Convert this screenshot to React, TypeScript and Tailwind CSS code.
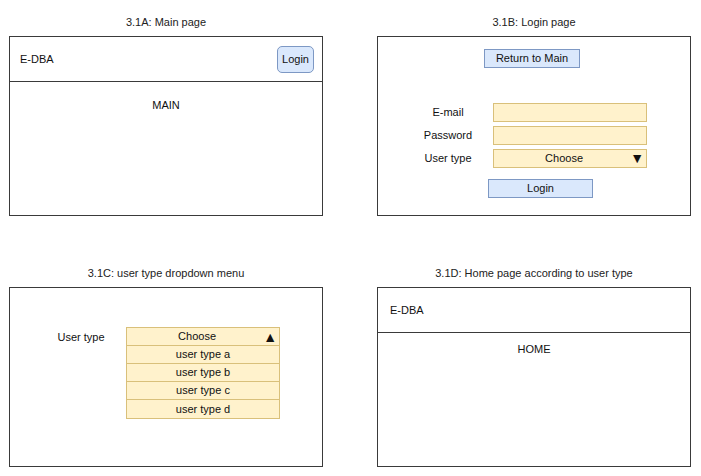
const font = { fontFamily: '"Liberation Sans", Arial, sans-serif' };

function Panel({ title, children }: { title: string; children: React.ReactNode }) {
  return (
    <div className="flex flex-col">
      <div className="h-[14px] text-center text-[11px] leading-[14px] text-[#222]">{title}</div>
      <div className="mt-[7px] h-[180px] w-[314px] border border-[#3a3a3a] bg-white">{children}</div>
    </div>
  );
}

function Field({ label, children }: { label: string; children?: React.ReactNode }) {
  return (
    <div className="flex h-[20px] items-center">
      <span className="w-[115px] pl-[25px] text-center text-[11px] text-[#111]">{label}</span>
      <div className="flex h-[19px] w-[154px] items-center border border-[#d9c07a] bg-[#fff2cc]">
        {children}
      </div>
    </div>
  );
}

export default function App() {
  const options = ["user type a", "user type b", "user type c", "user type d"];

  return (
    <div className="h-[476px] w-[701px] bg-white pl-[9px] pt-[15px] text-[#111]" style={font}>
      <div className="grid grid-cols-[314px_314px] gap-x-[54px] gap-y-[50px]">
        {/* 3.1A */}
        <Panel title="3.1A: Main page">
          <div className="flex h-[45px] items-center justify-between border-b border-[#3a3a3a] pl-[10px] pr-[8px]">
            <span className="text-[11px]">E-DBA</span>
            <button className="h-[27px] w-[37px] rounded-[5px] border border-[#7d98c4] bg-[#dae8fc] text-[11px]">
              Login
            </button>
          </div>
          <div className="pt-[15px] text-center text-[11px]">MAIN</div>
        </Panel>

        {/* 3.1B */}
        <Panel title="3.1B: Login page">
          <div className="flex flex-col">
            <div className="mt-[12px] flex justify-center pr-[4px]">
              <div className="flex h-[19px] w-[96px] items-center justify-center border border-[#7d98c4] bg-[#dae8fc] text-[11px]">
                Return to Main
              </div>
            </div>
            <div className="mt-[34px] flex flex-col gap-[3px]">
              <Field label="E-mail" />
              <Field label="Password" />
              <Field label="User type">
                <span className="flex-1 pl-[4px] text-center text-[11px]">Choose</span>
                <span className="pr-[2px] text-[14px] leading-none">▼</span>
              </Field>
            </div>
            <div className="mt-[11px] flex pl-[110px]">
              <div className="flex h-[19px] w-[105px] items-center justify-center border border-[#7d98c4] bg-[#dae8fc] text-[11px]">
                Login
              </div>
            </div>
          </div>
        </Panel>

        {/* 3.1C */}
        <Panel title="3.1C: user type dropdown menu">
          <div className="flex pt-[39px]">
            <span className="w-[116px] pl-[26px] pt-[2px] text-center text-[11px]">User type</span>
            <div className="flex w-[154px] flex-col border border-[#d9c07a] bg-[#fff2cc]">
              <div className="flex h-[18px] items-center border-b border-[#d9c07a]">
                <span className="flex-1 pl-[4px] text-center text-[11px]">Choose</span>
                <span className="pr-[2px] text-[14px] leading-none">▲</span>
              </div>
              {options.map((o, i) => (
                <div
                  key={o}
                  className={
                    "flex h-[18px] items-center justify-center text-[11px] " +
                    (i < options.length - 1 ? "border-b border-[#d9c07a]" : "")
                  }
                >
                  {o}
                </div>
              ))}
            </div>
          </div>
        </Panel>

        {/* 3.1D */}
        <Panel title="3.1D: Home page according to user type">
          <div className="flex h-[45px] items-center border-b border-[#3a3a3a] pl-[12px]">
            <span className="text-[11px]">E-DBA</span>
          </div>
          <div className="pt-[8px] text-center text-[11px]">HOME</div>
        </Panel>
      </div>
    </div>
  );
}
